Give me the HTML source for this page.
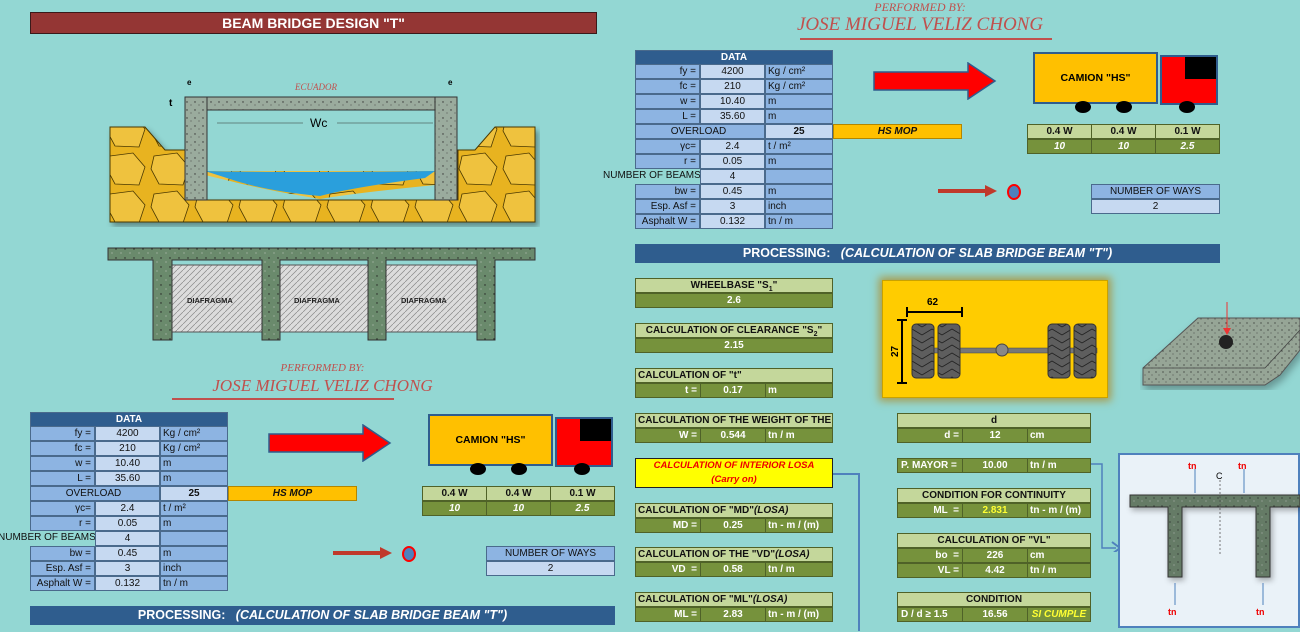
<!DOCTYPE html>
<html><head><meta charset="utf-8"><style>
*{margin:0;padding:0;box-sizing:border-box}
body{width:1300px;height:631px;overflow:hidden;background:#93d7d3;font-family:"Liberation Sans",sans-serif;position:relative}
.a{position:absolute}
.c{position:absolute;font-size:10px;line-height:14px;height:15px;border:1px solid #4a6a8c;white-space:nowrap;overflow:hidden;color:#111}
.l{background:#8db4e2;text-align:right;padding-right:3px}
.v{background:#c6d9f1;text-align:center}
.u{background:#8db4e2;padding-left:2px}
.g{position:absolute;font-size:10px;line-height:14px;height:15px;white-space:nowrap;overflow:hidden}
.gh{background:#c4d79b;text-align:center;border:1px solid #4f6228;font-weight:bold;color:#111}
.gv{background:#76923c;color:#fff;text-align:center;border:1px solid #4f6228;font-weight:bold}
.perf{position:absolute;font-family:"Liberation Serif",serif;font-style:italic;color:#c0504d;text-align:center}
</style></head><body>

<div class="a" style="left:30px;top:12px;width:567px;height:22px;background:#943634;border:1px solid #3a1a1a;color:#fff;font-weight:bold;font-size:14px;line-height:20px;text-align:center">BEAM BRIDGE DESIGN "T"</div>

<div class="perf" style="left:780px;top:0px;width:280px;font-size:12px">PERFORMED BY:</div>
<div class="perf" style="left:780px;top:14px;width:280px;font-size:19px">JOSE MIGUEL VELIZ CHONG</div>
<div class="a" style="left:800px;top:38px;width:252px;height:2px;background:#c0504d"></div>

<div class="perf" style="left:190px;top:362px;width:265px;font-size:11px">PERFORMED BY:</div>
<div class="perf" style="left:190px;top:376px;width:265px;font-size:17px">JOSE MIGUEL VELIZ CHONG</div>
<div class="a" style="left:172px;top:398px;width:222px;height:2px;background:#c0504d"></div>

<svg class="a" style="left:105px;top:75px" width="435" height="152">
<defs><pattern id="st" width="44" height="38" patternUnits="userSpaceOnUse"><rect width="44" height="38" fill="#e8b320"/><path d="M5 5 L28 2 L40 16 L34 34 L10 33 L2 18Z" fill="#efc23e" stroke="#4a3800" stroke-width=".8"/></pattern>
<pattern id="cn" width="8" height="8" patternUnits="userSpaceOnUse"><rect width="8" height="8" fill="#9aab9d"/><circle cx="2" cy="3" r=".7" fill="#333"/><circle cx="6" cy="6" r=".5" fill="#333"/></pattern></defs>
<g style="filter:drop-shadow(3px 4px 3px rgba(0,0,0,.35))">
<path d="M5 52 L40 52 L60 75 L80 75 L80 125 L353 125 L353 75 L370 75 L390 52 L430 52 L430 147 L5 147 Z" fill="url(#st)" stroke="#4a3800"/>
</g>
<path d="M100 96 L330 96 L330 110 Q250 118 215 124 Q160 115 125 106 L100 100 Z" fill="url(#st)"/>
<path d="M100 96 Q180 98 330 96 L320 103 Q250 112 215 121 Q160 116 125 104 Z" fill="#2a9fdc"/>
<rect x="95" y="22" width="245" height="13" fill="url(#cn)" stroke="#333"/>
<rect x="80" y="22" width="22" height="103" fill="url(#cn)" stroke="#333"/>
<rect x="330" y="22" width="22" height="103" fill="url(#cn)" stroke="#333"/>
<line x1="112" y1="48" x2="198" y2="48" stroke="#333" stroke-width=".6"/><line x1="232" y1="48" x2="328" y2="48" stroke="#333" stroke-width=".6"/>
<text x="205" y="52" font-size="12" font-family="Liberation Sans" fill="#000">Wc</text>
<text x="190" y="15" font-size="9" font-family="Liberation Serif" font-style="italic" fill="#c0504d">ECUADOR</text>
<text x="64" y="31" font-size="10" font-weight="bold" fill="#000">t</text>
<text x="82" y="10" font-size="8" font-weight="bold" fill="#000">e</text>
<text x="343" y="10" font-size="8" font-weight="bold" fill="#000">e</text>
</svg>

<svg class="a" style="left:105px;top:246px" width="435" height="98">
<defs><pattern id="ht" width="6" height="6" patternUnits="userSpaceOnUse"><rect width="6" height="6" fill="#dcdcdc"/><path d="M0 6 L6 0" stroke="#888" stroke-width=".7"/></pattern>
<pattern id="cg" width="9" height="9" patternUnits="userSpaceOnUse"><rect width="9" height="9" fill="#6a8a6c"/><circle cx="2" cy="3" r=".7" fill="#222"/><circle cx="7" cy="7" r=".5" fill="#ddd"/></pattern></defs>
<rect x="66" y="19" width="306" height="67" fill="url(#ht)" stroke="#555"/>
<path d="M3 2 H430 V14 H390 V94 H372 V14 H281 V94 H263 V14 H175 V94 H157 V14 H67 V94 H48 V14 H3 Z" fill="url(#cg)" stroke="#333"/>
<text x="82" y="57" font-size="7.5" font-weight="bold" fill="#222">DIAFRAGMA</text>
<text x="189" y="57" font-size="7.5" font-weight="bold" fill="#222">DIAFRAGMA</text>
<text x="296" y="57" font-size="7.5" font-weight="bold" fill="#222">DIAFRAGMA</text>
</svg>

<div class="a" style="left:635px;top:50px;width:600px;height:220px" id="g1"></div>
<div class="a" style="left:30px;top:412px;width:600px;height:220px" id="g2"></div>

<div class="g gh" style="left:635px;top:278px;width:198px">WHEELBASE "S<sub style="font-size:7px">1</sub>"</div>
<div class="g gv" style="left:635px;top:293px;width:198px">2.6</div>
<div class="g gh" style="left:635px;top:323px;width:198px">CALCULATION OF CLEARANCE "S<sub style="font-size:7px">2</sub>"</div>
<div class="g gv" style="left:635px;top:338px;width:198px">2.15</div>

<div class="g gh" style="left:635px;top:368px;width:198px;text-align:left;padding-left:2px">CALCULATION OF "t"</div>
<div class="g gv" style="left:635px;top:383px;width:66px;text-align:right;padding-right:3px">t =</div><div class="g gv" style="left:700px;top:383px;width:66px">0.17</div><div class="g gv" style="left:765px;top:383px;width:68px;text-align:left;padding-left:2px">m</div>

<div class="g gh" style="left:635px;top:413px;width:198px;text-align:left;padding-left:2px">CALCULATION OF THE WEIGHT OF THE SLA</div>
<div class="g gv" style="left:635px;top:428px;width:66px;text-align:right;padding-right:3px">W =</div><div class="g gv" style="left:700px;top:428px;width:66px">0.544</div><div class="g gv" style="left:765px;top:428px;width:68px;text-align:left;padding-left:2px">tn / m</div>

<div class="a" style="left:635px;top:458px;width:198px;height:30px;background:#ffff00;border:1.5px solid #222;color:#e00;font-style:italic;font-weight:bold;font-size:9.5px;text-align:center;line-height:14px">CALCULATION OF INTERIOR LOSA<br>(Carry on)</div>
<div class="a" style="left:833px;top:473px;width:26px;height:1.5px;background:#4f81bd"></div>
<div class="a" style="left:858px;top:473px;width:1.5px;height:158px;background:#4f81bd"></div>

<div class="g gh" style="left:635px;top:503px;width:198px;text-align:left;padding-left:2px">CALCULATION OF "MD"<i>(LOSA)</i></div>
<div class="g gv" style="left:635px;top:518px;width:66px;text-align:right;padding-right:3px">MD =</div><div class="g gv" style="left:700px;top:518px;width:66px">0.25</div><div class="g gv" style="left:765px;top:518px;width:68px;text-align:left;padding-left:2px">tn - m / (m)</div>

<div class="g gh" style="left:635px;top:547px;width:198px;text-align:left;padding-left:2px">CALCULATION OF THE "VD"<i>(LOSA)</i></div>
<div class="g gv" style="left:635px;top:562px;width:66px;text-align:right;padding-right:3px">VD &nbsp;=</div><div class="g gv" style="left:700px;top:562px;width:66px">0.58</div><div class="g gv" style="left:765px;top:562px;width:68px;text-align:left;padding-left:2px">tn / m</div>

<div class="g gh" style="left:635px;top:592px;width:198px;text-align:left;padding-left:2px">CALCULATION OF "ML"<i>(LOSA)</i></div>
<div class="g gv" style="left:635px;top:607px;width:66px;text-align:right;padding-right:3px">ML =</div><div class="g gv" style="left:700px;top:607px;width:66px">2.83</div><div class="g gv" style="left:765px;top:607px;width:68px;text-align:left;padding-left:2px">tn - m / (m)</div>

<div class="g gh" style="left:897px;top:413px;width:194px">d</div>
<div class="g gv" style="left:897px;top:428px;width:66px;text-align:right;padding-right:3px">d =</div><div class="g gv" style="left:962px;top:428px;width:66px">12</div><div class="g gv" style="left:1027px;top:428px;width:64px;text-align:left;padding-left:2px">cm</div>

<div class="g gv" style="left:897px;top:458px;width:66px;text-align:left;padding-left:3px">P. MAYOR =</div><div class="g gv" style="left:962px;top:458px;width:66px">10.00</div><div class="g gv" style="left:1027px;top:458px;width:64px;text-align:left;padding-left:2px">tn / m</div>

<div class="g gh" style="left:897px;top:488px;width:194px">CONDITION FOR CONTINUITY</div>
<div class="g gv" style="left:897px;top:503px;width:66px;text-align:right;padding-right:3px">ML &nbsp;=</div><div class="g gv" style="left:962px;top:503px;width:66px;color:#ffff33">2.831</div><div class="g gv" style="left:1027px;top:503px;width:64px;text-align:left;padding-left:2px">tn - m / (m)</div>

<div class="g gh" style="left:897px;top:533px;width:194px">CALCULATION OF "VL"</div>
<div class="g gv" style="left:897px;top:548px;width:66px;text-align:right;padding-right:3px">bo &nbsp;=</div><div class="g gv" style="left:962px;top:548px;width:66px">226</div><div class="g gv" style="left:1027px;top:548px;width:64px;text-align:left;padding-left:2px">cm</div>
<div class="g gv" style="left:897px;top:563px;width:66px;text-align:right;padding-right:3px">VL =</div><div class="g gv" style="left:962px;top:563px;width:66px">4.42</div><div class="g gv" style="left:1027px;top:563px;width:64px;text-align:left;padding-left:2px">tn / m</div>

<div class="g gh" style="left:897px;top:592px;width:194px">CONDITION</div>
<div class="g gv" style="left:897px;top:607px;width:66px;text-align:left;padding-left:3px">D / d ≥ 1.5</div><div class="g gv" style="left:962px;top:607px;width:66px">16.56</div><div class="g gv" style="left:1027px;top:607px;width:64px;color:#ffff33;font-style:italic">SI CUMPLE</div>

<svg class="a" style="left:1090px;top:462px" width="32" height="90"><path d="M1 2 H12 V86 H26" fill="none" stroke="#4f81bd" stroke-width="1.5"/><path d="M22 80 L30 86 L22 92" fill="none" stroke="#4f81bd" stroke-width="2"/></svg>

<div class="a" style="left:882px;top:280px;width:226px;height:118px;background:#ffcc00;border:1.5px solid #c9a200;box-shadow:0 0 8px 3px #a89a4a"></div>
<svg class="a" style="left:882px;top:280px" width="226" height="118">
<defs><pattern id="ty" width="20" height="8" patternUnits="userSpaceOnUse"><rect width="20" height="8" fill="#5e5e5e"/><path d="M0 7 L10 1 L20 7" fill="none" stroke="#222" stroke-width=".8"/></pattern></defs>
<rect x="30" y="68" width="185" height="5" fill="#777" stroke="#444" stroke-width=".5"/>
<circle cx="120" cy="70" r="6" fill="#888" stroke="#444"/>
<rect x="30" y="44" width="22" height="54" rx="4" fill="url(#ty)" stroke="#333"/>
<rect x="56" y="44" width="22" height="54" rx="4" fill="url(#ty)" stroke="#333"/>
<rect x="166" y="44" width="22" height="54" rx="4" fill="url(#ty)" stroke="#333"/>
<rect x="192" y="44" width="22" height="54" rx="4" fill="url(#ty)" stroke="#333"/>
<path d="M25 32 H80 M25 27 V37 M80 27 V37 M20 40 V103 M15 40 H25 M15 103 H25" stroke="#000" stroke-width="2"/>
<text x="45" y="25" font-size="10" font-weight="bold" fill="#000">62</text>
<text x="0" y="0" font-size="10" font-weight="bold" fill="#000" transform="translate(16 77) rotate(-90)">27</text>
</svg>

<svg class="a" style="left:1140px;top:300px" width="160" height="90">
<defs><pattern id="sg" width="7" height="7" patternUnits="userSpaceOnUse"><rect width="7" height="7" fill="#96a596"/><circle cx="2" cy="2" r=".6" fill="#222"/><circle cx="5" cy="5" r=".5" fill="#333"/></pattern></defs>
<g style="filter:drop-shadow(2px 5px 4px rgba(0,0,0,.3))">
<path d="M3 68 L58 18 H160 V50 L140 75 L125 85 H3 Z" fill="url(#sg)" stroke="#555"/></g>
<path d="M3 68 H125 L160 30" fill="none" stroke="#444" stroke-width=".8"/>
<circle cx="86" cy="42" r="7" fill="#222"/>
<line x1="87" y1="2" x2="87" y2="32" stroke="#e33" stroke-width="1"/><path d="M83 28 L87 35 L91 28Z" fill="#e33"/>
</svg>

<div class="a" style="left:1118px;top:453px;width:182px;height:175px;background:#eaf2f8;border:2px solid #4f81bd"></div>
<svg class="a" style="left:1120px;top:455px" width="180" height="172">
<defs><pattern id="tg" width="8" height="8" patternUnits="userSpaceOnUse"><rect width="8" height="8" fill="#657b66"/><circle cx="2" cy="3" r=".6" fill="#222"/><circle cx="6" cy="6" r=".5" fill="#ccc"/></pattern></defs>
<g style="filter:drop-shadow(2px 3px 3px rgba(0,0,0,.3))">
<path d="M10 40 H180 V52 H150 V122 H136 V52 H62 V122 H48 V52 H10 Z" fill="url(#tg)" stroke="#333"/></g>
<line x1="100" y1="25" x2="100" y2="100" stroke="#444" stroke-dasharray="2 2" stroke-width=".7"/>
<text x="96" y="24" font-size="9" fill="#000">C</text>
<line x1="75" y1="14" x2="75" y2="38" stroke="#4f81bd"/><line x1="124" y1="14" x2="124" y2="38" stroke="#4f81bd"/>
<line x1="55" y1="128" x2="55" y2="150" stroke="#4f81bd"/><line x1="143" y1="128" x2="143" y2="150" stroke="#4f81bd"/>
<text x="68" y="14" font-size="9" font-weight="bold" fill="#e00">tn</text><text x="118" y="14" font-size="9" font-weight="bold" fill="#e00">tn</text>
<text x="48" y="160" font-size="9" font-weight="bold" fill="#e00">tn</text><text x="136" y="160" font-size="9" font-weight="bold" fill="#e00">tn</text>
</svg>

<script>
function grp(){var rows=[["fy =","4200","Kg / cm²"],["fc =","210","Kg / cm²"],["w =","10.40","m"],["L =","35.60","m"],null,["γc=","2.4","t / m²"],["r =","0.05","m"],["NUMBER OF BEAMS","4",""],["bw =","0.45","m"],["Esp. Asf =","3","inch"],["Asphalt W =","0.132","tn / m"]];
var h='<div class="c" style="left:0;top:0;width:198px;height:15px;background:#2f5d8e;color:#fff;font-weight:bold;text-align:center;line-height:13px">DATA</div>';
rows.forEach(function(r,i){var t=14+i*15;
if(!r){h+='<div class="c l" style="left:0;top:'+t+'px;width:130px;text-align:center">OVERLOAD</div><div class="c v" style="left:130px;top:'+t+'px;width:68px;font-weight:bold">25</div><div class="c" style="left:198px;top:'+t+'px;width:129px;background:#ffc000;border-color:#b38600;text-align:center;font-weight:bold;font-style:italic">HS MOP</div>';return;}
if(r[0].length>12)h+='<div class="c" style="left:-32px;top:'+t+'px;width:97px;border:none;text-align:right;padding-right:3px">'+r[0]+'</div>';
else h+='<div class="c l" style="left:0;top:'+t+'px;width:65px">'+r[0]+'</div>';
h+='<div class="c v" style="left:65px;top:'+t+'px;width:65px">'+r[1]+'</div><div class="c u" style="left:130px;top:'+t+'px;width:68px">'+r[2]+'</div>';});
h+='<svg class="a" style="left:238px;top:12px" width="124" height="38"><path d="M1 10 H95 V1 L122 19 L95 37 V28 H1 Z" fill="#f00" stroke="#2f5d8e" stroke-width="1.5"/></svg>';
h+='<div class="a" style="left:398px;top:2px;width:125px;height:52px;background:#ffc000;border:2px solid #2f5d8e;font-size:10.5px;font-weight:bold;text-align:center;line-height:48px">CAMION "HS"</div>';
h+='<div class="a" style="left:525px;top:5px;width:58px;height:50px;background:#f00;border:2px solid #2f5d8e"></div><div class="a" style="left:550px;top:7px;width:31px;height:22px;background:#000"></div>';
[440,481,544].forEach(function(x){h+='<div class="a" style="left:'+x+'px;top:51px;width:16px;height:12px;border-radius:50%;background:#000"></div>';});
["0.4 W","0.4 W","0.1 W"].forEach(function(s,i){h+='<div class="g gh" style="left:'+(392+i*64)+'px;top:74px;width:65px">'+s+'</div><div class="g gv" style="left:'+(392+i*64)+'px;top:89px;width:65px;font-style:italic">'+["10","10","2.5"][i]+'</div>';});
h+='<div class="a" style="left:303px;top:139px;width:50px;height:4px;background:#c0392b"></div><svg class="a" style="left:350px;top:135px" width="14" height="12"><path d="M0 0 L12 6 L0 12Z" fill="#c0392b"/></svg>';
h+='<div class="a" style="left:372px;top:134px;width:14px;height:16px;border-radius:50%;background:#4f81bd;border:2px solid #f00"></div>';
h+='<div class="c l" style="left:456px;top:134px;width:129px;text-align:center;padding:0">NUMBER OF WAYS</div><div class="c v" style="left:456px;top:149px;width:129px">2</div>';
h+='<div class="a" style="left:0;top:194px;width:585px;height:19px;background:#2f5d8e;color:#fff;font-weight:bold;font-size:12.5px;line-height:19px;text-align:center">PROCESSING:&nbsp;&nbsp;&nbsp;<i>(CALCULATION OF SLAB BRIDGE BEAM "T")</i></div>';
return h;}
document.getElementById('g1').innerHTML=grp();
document.getElementById('g2').innerHTML=grp();
</script>
</body></html>
